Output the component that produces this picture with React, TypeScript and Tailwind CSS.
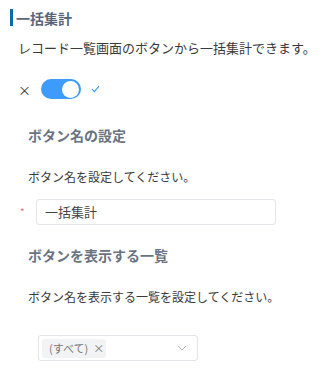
import React from "react";

export default function App() {
  const font = { fontFamily: '"Noto Sans CJK JP", "Noto Sans", sans-serif' };
  return (
    <div className="w-[328px] h-[376px] bg-white overflow-hidden" style={font}>
      <div className="pt-[9px] pl-[10px]">
        <div className="flex items-center h-[17px]">
          <div className="w-[3px] h-[17px] bg-[#0d6aa8]" />
          <div className="ml-[3px] text-[14px] font-bold text-[#5a6577] leading-none">一括集計</div>
        </div>
        <div className="mt-[12px] pl-[8px] text-[13px] text-[#3a3a3a] leading-[20px]">
          レコード一覧画面のボタンから一括集計できます。
        </div>
        <div className="mt-[21px] pl-[8px] flex items-center">
          <span className="text-[#333] text-[13px] leading-none">×</span>
          <div className="ml-[10px] w-[40px] h-[20px] rounded-full bg-[#3d9bfb] flex items-center justify-end pr-[2px]">
            <div className="w-[17px] h-[17px] rounded-full bg-white" />
          </div>
          <svg className="ml-[10px]" width="9" height="8" viewBox="0 0 9 8">
            <path d="M1 4.2 L3.4 6.6 L8 1.2" fill="none" stroke="#3d9bfb" strokeWidth="1.1" />
          </svg>
        </div>
        <div className="mt-[26px] pl-[18px] text-[14px] font-bold text-[#6b7280] leading-[20px]">
          ボタン名の設定
        </div>
        <div className="mt-[22px] pl-[18px] text-[12px] text-[#3a3a3a] leading-[20px]">
          ボタン名を設定してください。
        </div>
        <div className="mt-[12px] flex items-center">
          <span className="ml-[10px] w-[4px] text-[#f06c7a] text-[10px] leading-none">*</span>
          <div className="ml-[12px] w-[240px] h-[26px] border border-[#e3e3e8] rounded-[3px] flex items-center pl-[8px] text-[13px] text-[#444]">
            一括集計
          </div>
        </div>
        <div className="mt-[20px] pl-[18px] text-[14px] font-bold text-[#6b7280] leading-[20px]">
          ボタンを表示する一覧
        </div>
        <div className="mt-[22px] pl-[18px] text-[12px] text-[#3a3a3a] leading-[20px]">
          ボタン名を表示する一覧を設定してください。
        </div>
        <div className="mt-[28px] ml-[28px] w-[160px] h-[26px] border border-[#e3e3e8] rounded-[3px] flex items-center pl-[3px] pr-[10px]">
          <div className="h-[19px] w-[64px] pl-[7px] rounded-[3px] bg-[#f2f3f5] flex items-center text-[11px] text-[#777]">
            <span>(すべて)</span>
            <span className="ml-[5px] text-[11px]">×</span>
          </div>
          <div className="flex-1" />
          <svg width="10" height="6" viewBox="0 0 10 6">
            <path d="M1 1 L5 5 L9 1" fill="none" stroke="#b8b8b8" strokeWidth="1" />
          </svg>
        </div>
      </div>
    </div>
  );
}
